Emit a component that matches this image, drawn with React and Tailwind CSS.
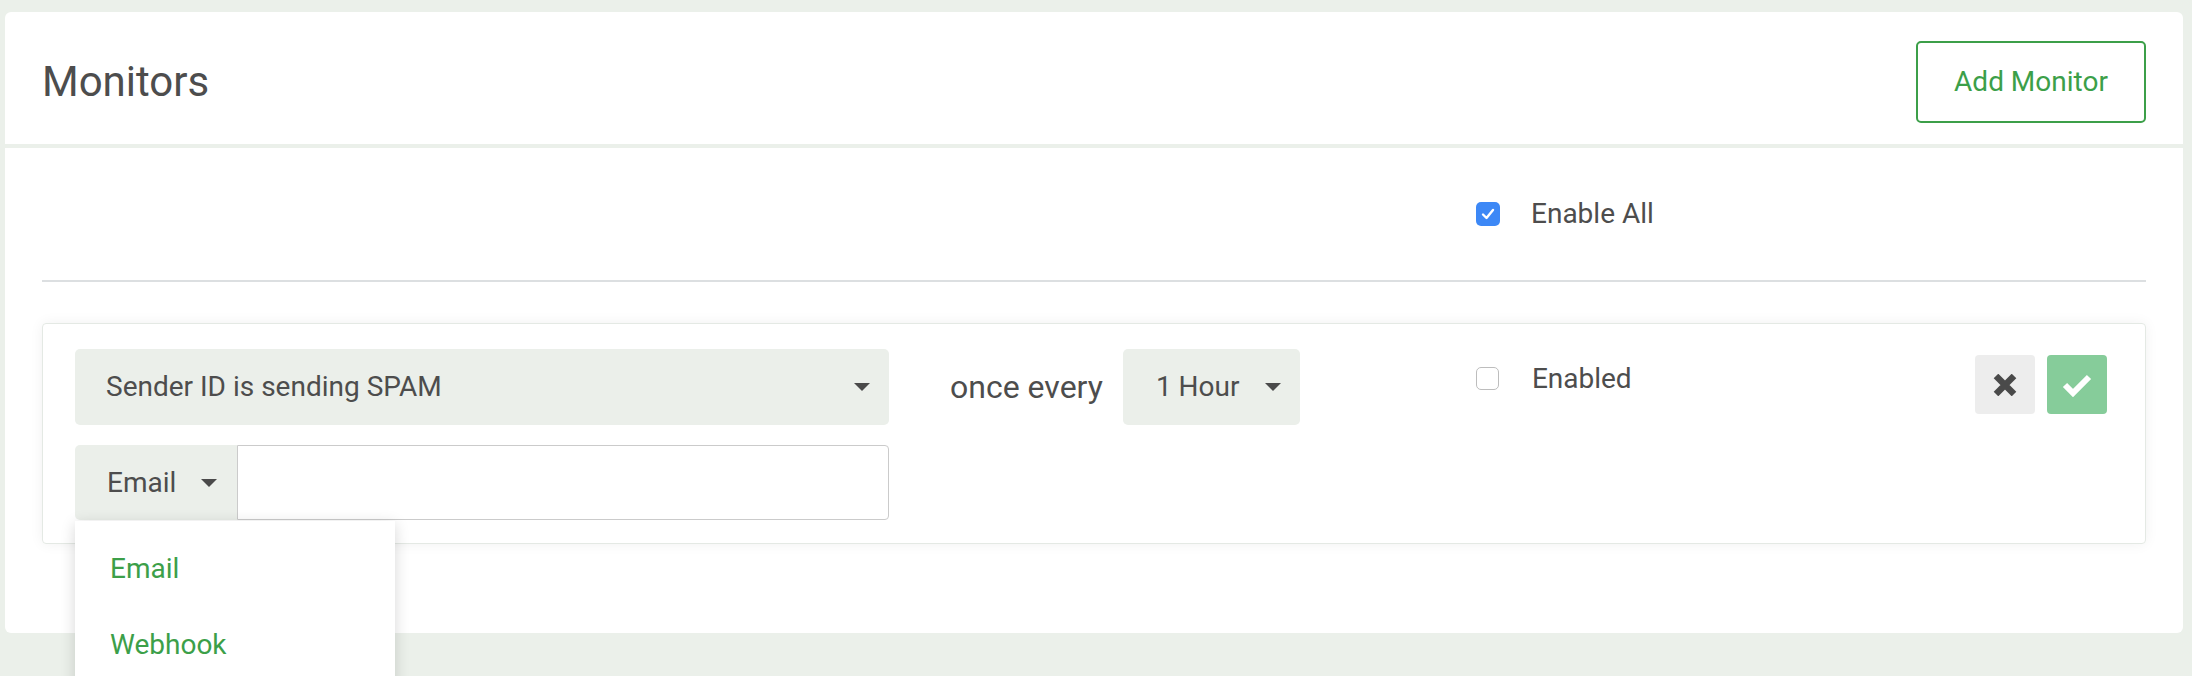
import React, { useState } from 'react';

const Caret = () => (
  <svg width="16" height="8" viewBox="0 0 16 8" className="shrink-0">
    <path d="M0 0 L16 0 L8 8 Z" fill="#4a4a4a" />
  </svg>
);

const CheckBox = ({ checked }) =>
  checked ? (
    <div className="w-[24px] h-[24px] rounded-[5px] bg-[#3d88f6] flex items-center justify-center shrink-0">
      <svg width="14" height="12" viewBox="0 0 14 12">
        <path d="M2 6.5 L5.5 10 L12 2" fill="none" stroke="#fff" strokeWidth="2.4" strokeLinecap="round" strokeLinejoin="round" />
      </svg>
    </div>
  ) : (
    <div className="w-[23px] h-[23px] rounded-[5px] border border-[#bdbdbd] bg-white shrink-0" />
  );

const App = () => {
  const [channel] = useState('Email');

  return (
    <div className="h-[676px] overflow-hidden bg-[#ebf0ea] pt-3 pl-[5px] pr-[9px] text-[#4d4d4d]" style={{ fontFamily: 'Roboto, "Noto Sans", sans-serif' }}>
      <div className="relative bg-white rounded-[6px] h-[621px]">
        {/* Header */}
        <div className="flex items-center justify-between h-[132px] pt-2 px-[37px]">
          <h1 className="text-[42px] leading-none font-normal">Monitors</h1>
          <button className="w-[230px] h-[82px] border-2 border-[#3c9f49] rounded-[5px] text-[28px] text-[#3c9f49]">
            Add Monitor
          </button>
        </div>
        <div className="h-1 bg-[#ebf0ea]" />

        {/* Body */}
        <div className="px-[37px]">
          <div className="h-[132px] pt-[54px]">
            <div className="flex items-center ml-[1434px] gap-[31px]">
              <CheckBox checked />
              <span className="text-[28px] leading-[24px]">Enable All</span>
            </div>
          </div>
          <div className="h-[2px] bg-[#dcdfe1]" />

          {/* Monitor row */}
          <div className="mt-[41px] h-[221px] border border-[#e4e9e4] rounded-[4px] shadow-[0_0_14px_rgba(0,0,0,0.06)] pl-[32px] pr-[38px] pt-[25px] flex items-start">
            <div className="w-[814px] flex flex-col gap-[20px]">
              <div className="h-[76px] bg-[#ebefea] rounded-[5px] flex items-center justify-between pl-[31px] pr-[19px]">
                <span className="text-[28px]">Sender ID is sending SPAM</span>
                <Caret />
              </div>
              <div className="flex h-[75px]">
                <div className="relative w-[162px] bg-[#ebefea] rounded-l-[5px] flex items-center justify-between pl-[32px] pr-[20px]">
                  <span className="text-[28px]">{channel}</span>
                  <Caret />
                  <div className="absolute left-0 top-full mt-[1px] w-[320px] h-[200px] bg-white shadow-[0_3px_14px_rgba(0,0,0,0.16)] pt-[10px] z-10">
                    <div className="h-[76px] flex items-center pl-[35px] text-[28px] text-[#3c9f49]">Email</div>
                    <div className="h-[76px] flex items-center pl-[35px] text-[28px] text-[#3c9f49]">Webhook</div>
                  </div>
                </div>
                <input className="flex-1 border-[1.5px] border-[#cbcbcb] rounded-r-[4px] outline-none px-3 text-[28px]" />
              </div>
            </div>

            <div className="h-[76px] flex items-center ml-[61px] text-[32px]">once every</div>

            <div className="ml-[20px] w-[177px] h-[76px] bg-[#ebefea] rounded-[5px] flex items-center justify-between pl-[33px] pr-[19px]">
              <span className="text-[28px]">1 Hour</span>
              <Caret />
            </div>

            <div className="ml-[176px] pt-[18px] flex items-center gap-[33px]">
              <CheckBox checked={false} />
              <span className="text-[28px] leading-[23px]">Enabled</span>
            </div>

            <div className="ml-auto pt-[6px] flex gap-[12px]">
              <button className="w-[60px] h-[59px] rounded-[4px] bg-[#ededed] flex items-center justify-center">
                <svg width="24" height="22" viewBox="0 0 24 22">
                  <path d="M3 2 L21 20 M21 2 L3 20" stroke="#4a4a4a" strokeWidth="6.5" />
                </svg>
              </button>
              <button className="w-[60px] h-[59px] rounded-[4px] bg-[#86cc9a] flex items-center justify-center">
                <svg width="30" height="24" viewBox="0 0 30 24">
                  <path d="M3 12 L11 20 L27 4" fill="none" stroke="#fff" strokeWidth="6" strokeLinejoin="miter" />
                </svg>
              </button>
            </div>
          </div>
        </div>
      </div>
    </div>
  );
};

export default App;
